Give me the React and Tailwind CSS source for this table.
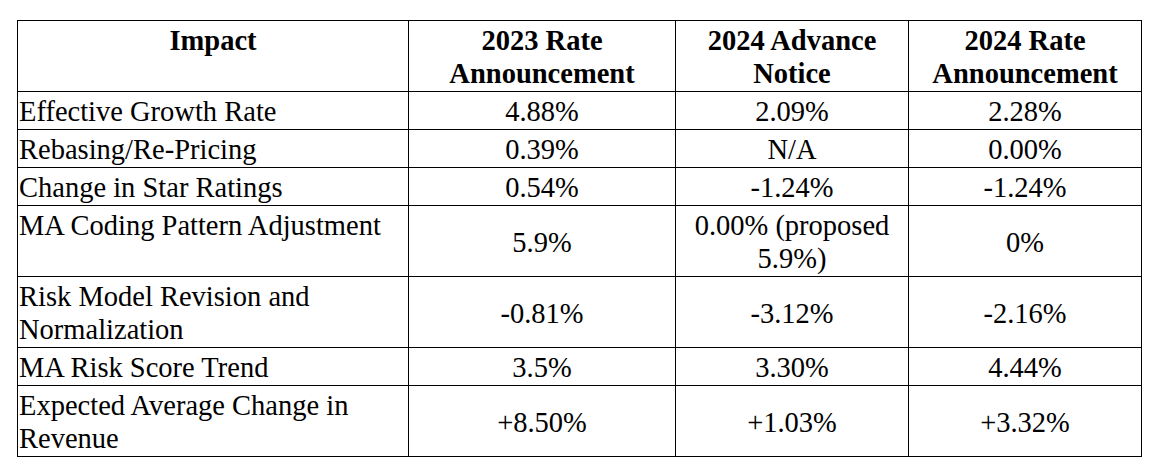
const rows = [
  { label: "Effective Growth Rate", a: "4.88%", b: "2.09%", c: "2.28%" },
  { label: "Rebasing/Re-Pricing", a: "0.39%", b: "N/A", c: "0.00%" },
  { label: "Change in Star Ratings", a: "0.54%", b: "-1.24%", c: "-1.24%" },
  { label: "MA Coding Pattern Adjustment", a: "5.9%", b: "0.00% (proposed 5.9%)", c: "0%" },
  { label: "Risk Model Revision and Normalization", a: "-0.81%", b: "-3.12%", c: "-2.16%" },
  { label: "MA Risk Score Trend", a: "3.5%", b: "3.30%", c: "4.44%" },
  { label: "Expected Average Change in Revenue", a: "+8.50%", b: "+1.03%", c: "+3.32%" },
];

export default function App() {
  return (
    <div className="w-[1158px] h-[469px] bg-white pt-[20px] pl-[17px] font-[family-name:'Times_New_Roman','Liberation_Serif',serif] text-black text-[28.5px] leading-[33px]">
      <table className="table-fixed border-collapse w-[1124px]">
        <colgroup>
          <col className="w-[391px]" />
          <col className="w-[267px]" />
          <col className="w-[233px]" />
          <col className="w-[233px]" />
        </colgroup>
        <thead>
          <tr>
            {["Impact", "2023 Rate Announcement", "2024 Advance Notice", "2024 Rate Announcement"].map((h) => (
              <th key={h} className="border border-black align-top text-center font-bold pt-[3px] pb-[1px] px-[2px]">
                {h}
              </th>
            ))}
          </tr>
        </thead>
        <tbody>
          {rows.map((r) => (
            <tr key={r.label}>
              <td className="border border-black align-top text-left pt-[3px] pb-[1px] pl-[1px] pr-[2px]">{r.label}</td>
              <td className="border border-black align-middle text-center pt-[3px] pb-[1px] px-[2px]">{r.a}</td>
              <td className="border border-black align-middle text-center pt-[3px] pb-[1px] px-[2px]">{r.b}</td>
              <td className="border border-black align-middle text-center pt-[3px] pb-[1px] px-[2px]">{r.c}</td>
            </tr>
          ))}
        </tbody>
      </table>
    </div>
  );
}
